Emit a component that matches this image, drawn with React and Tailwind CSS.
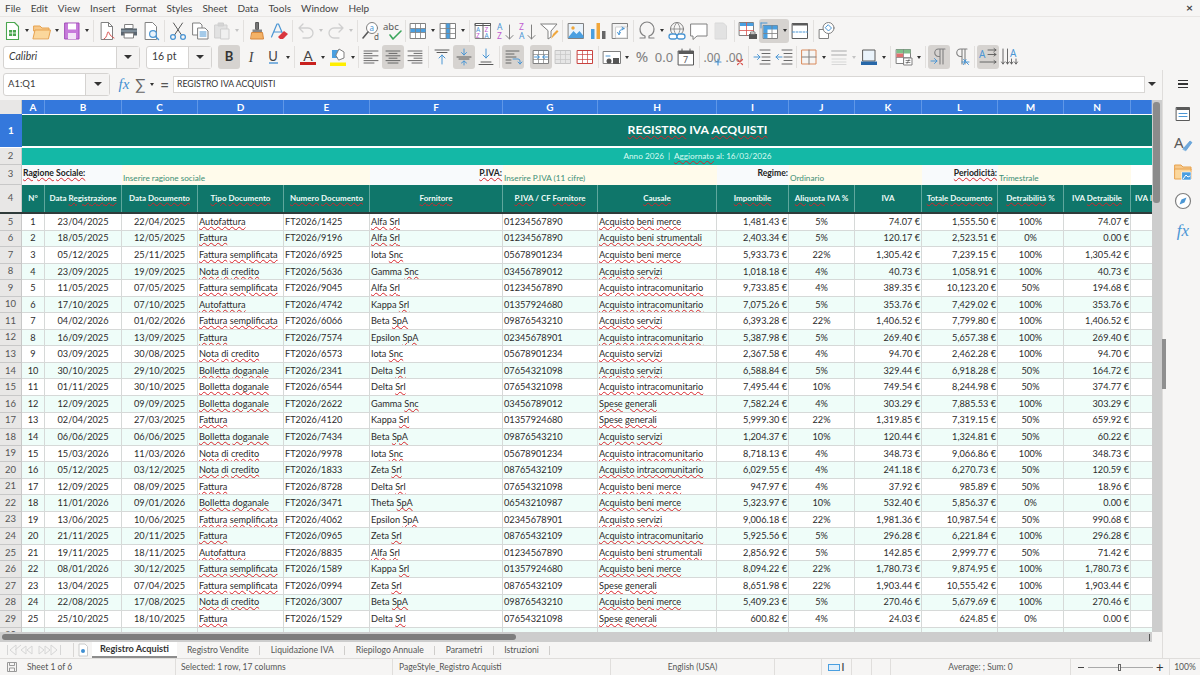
import React from "react";

const RAW = `1|23/04/2025|22/04/2025|Autofattura|FT2026/1425|Alfa Srl|01234567890|Acquisto beni merce|1,481.43|5%|74.07|1,555.50|100%|74.07
2|18/05/2025|12/05/2025|Fattura|FT2026/9196|Alfa Srl|01234567890|Acquisto beni strumentali|2,403.34|5%|120.17|2,523.51|0%|0.00
3|05/12/2025|25/11/2025|Fattura semplificata|FT2026/6925|Iota Snc|05678901234|Acquisto beni merce|5,933.73|22%|1,305.42|7,239.15|100%|1,305.42
4|23/09/2025|19/09/2025|Nota di credito|FT2026/5636|Gamma Snc|03456789012|Acquisto servizi|1,018.18|4%|40.73|1,058.91|100%|40.73
5|11/05/2025|07/05/2025|Fattura semplificata|FT2026/9045|Alfa Srl|01234567890|Acquisto intracomunitario|9,733.85|4%|389.35|10,123.20|50%|194.68
6|17/10/2025|07/10/2025|Autofattura|FT2026/4742|Kappa Srl|01357924680|Acquisto intracomunitario|7,075.26|5%|353.76|7,429.02|100%|353.76
7|04/02/2026|01/02/2026|Fattura semplificata|FT2026/6066|Beta SpA|09876543210|Acquisto servizi|6,393.28|22%|1,406.52|7,799.80|100%|1,406.52
8|16/09/2025|13/09/2025|Fattura|FT2026/7574|Epsilon SpA|02345678901|Acquisto intracomunitario|5,387.98|5%|269.40|5,657.38|100%|269.40
9|03/09/2025|30/08/2025|Nota di credito|FT2026/6573|Iota Snc|05678901234|Acquisto servizi|2,367.58|4%|94.70|2,462.28|100%|94.70
10|30/10/2025|29/10/2025|Bolletta doganale|FT2026/2341|Delta Srl|07654321098|Acquisto servizi|6,588.84|5%|329.44|6,918.28|50%|164.72
11|01/11/2025|30/10/2025|Bolletta doganale|FT2026/6544|Delta Srl|07654321098|Acquisto intracomunitario|7,495.44|10%|749.54|8,244.98|50%|374.77
12|12/09/2025|09/09/2025|Bolletta doganale|FT2026/2622|Gamma Snc|03456789012|Spese generali|7,582.24|4%|303.29|7,885.53|100%|303.29
13|02/04/2025|27/03/2025|Fattura|FT2026/4120|Kappa Srl|01357924680|Spese generali|5,999.30|22%|1,319.85|7,319.15|50%|659.92
14|06/06/2025|06/06/2025|Bolletta doganale|FT2026/7434|Beta SpA|09876543210|Acquisto servizi|1,204.37|10%|120.44|1,324.81|50%|60.22
15|15/03/2026|11/03/2026|Nota di credito|FT2026/9978|Iota Snc|05678901234|Acquisto intracomunitario|8,718.13|4%|348.73|9,066.86|100%|348.73
16|05/12/2025|03/12/2025|Nota di credito|FT2026/1833|Zeta Srl|08765432109|Acquisto intracomunitario|6,029.55|4%|241.18|6,270.73|50%|120.59
17|12/09/2025|08/09/2025|Fattura|FT2026/8728|Delta Srl|07654321098|Acquisto beni merce|947.97|4%|37.92|985.89|50%|18.96
18|11/01/2026|09/01/2026|Bolletta doganale|FT2026/3471|Theta SpA|06543210987|Acquisto beni merce|5,323.97|10%|532.40|5,856.37|0%|0.00
19|13/06/2025|10/06/2025|Fattura semplificata|FT2026/4062|Epsilon SpA|02345678901|Acquisto servizi|9,006.18|22%|1,981.36|10,987.54|50%|990.68
20|21/11/2025|20/11/2025|Fattura|FT2026/0965|Zeta Srl|08765432109|Acquisto intracomunitario|5,925.56|5%|296.28|6,221.84|100%|296.28
21|19/11/2025|18/11/2025|Autofattura|FT2026/8835|Alfa Srl|01234567890|Acquisto beni strumentali|2,856.92|5%|142.85|2,999.77|50%|71.42
22|08/01/2026|30/12/2025|Fattura semplificata|FT2026/1589|Kappa Srl|01357924680|Acquisto beni merce|8,094.22|22%|1,780.73|9,874.95|100%|1,780.73
23|13/04/2025|07/04/2025|Fattura semplificata|FT2026/0994|Zeta Srl|08765432109|Spese generali|8,651.98|22%|1,903.44|10,555.42|100%|1,903.44
24|22/08/2025|17/08/2025|Nota di credito|FT2026/3007|Beta SpA|09876543210|Acquisto beni merce|5,409.23|5%|270.46|5,679.69|100%|270.46
25|25/10/2025|18/10/2025|Fattura|FT2026/1529|Delta Srl|07654321098|Spese generali|600.82|4%|24.03|624.85|0%|0.00
26|14/05/2025|10/05/2025|Fattura semplificata|FT2026/2210|Alfa Srl|01234567890|Spese generali|8,144.12|4%|325.76|8,469.88|50%|162.88`;

const ROWS = RAW.split("\n").map((l) => l.split("|"));
const COLS = "grid grid-cols-[22px_23px_77px_76px_86px_86px_133px_95px_119px_72px_66px_67px_76px_66px_67px_21px]";
const LETTERS = ["A","B","C","D","E","F","G","H","I","J","K","L","M","N",""];
const OK = new Set(["Data","IVA","%","/","CF","N°","Anno","2026","|","16/03/2026","al:","Regime:","Inserire"]);

function Sq({ t, keep = OK }) {
  const parts = t.split(" ");
  return (
    <span className="whitespace-pre">
      {parts.map((w, i) => (
        <React.Fragment key={i}>
          {keep.has(w) ? w : <span className="underline decoration-wavy decoration-[#d8242a] decoration-1 underline-offset-1">{w}</span>}
          {i < parts.length - 1 ? " " : ""}
        </React.Fragment>
      ))}
    </span>
  );
}

const Svg = ({ children }) => <svg width="22" height="22" viewBox="0 0 22 22" fill="none" strokeLinecap="round" strokeLinejoin="round">{children}</svg>;
const B = ({ children, active }) => <div className={active ? "w-[22px] h-[24px] flex items-center justify-center rounded-[3px] bg-[#d6d3d0]" : "w-[22px] h-[24px] flex items-center justify-center"}>{children}</div>;
const Ar = ({ off }) => <div className="w-[8px] h-[24px] flex items-center justify-center"><div className={off ? "w-0 h-0 border-x-[2.5px] border-x-transparent border-t-[3px] border-t-[#c4c4c4]" : "w-0 h-0 border-x-[2.5px] border-x-transparent border-t-[3px] border-t-[#333]"} /></div>;
const Sep = () => <div className="w-[5px] h-[22px] flex justify-center"><div className="w-px h-full bg-[#e2e0de]" /></div>;
const Sep3 = () => <div className="w-[3px] h-[22px] flex justify-center"><div className="w-px h-full bg-[#e2e0de]" /></div>;

const BL = "#4b96d4", DK = "#5a5a5a", GR = "#808080", LG = "#cfcfcf";

const INew = () => <Svg><path d="M5.5 2.5h8l4 4v13h-12z" fill="#fff" stroke="#4aa64f" strokeWidth="1.1"/><path d="M8 10h7v6H8z" fill="#4aa64f"/><path d="M8 13h7M11.500 10v6" stroke="#fff" strokeWidth=".8"/></Svg>;
const IOpen = () => <Svg><path d="M3 6h6l2 2h7v3H3z" fill="#f7c98b" stroke="#e7a24f"/><path d="M2 18.500 4 10h15.500l-2 8.500z" fill="#fbd79c" stroke="#e7a24f"/></Svg>;
const ISave = () => <Svg><path d="M4 3h14v16H4z" fill="#c77bdb" stroke="#a24db8"/><path d="M7 3.500h8v6H7z" fill="#fff"/><path d="M7 13h8v6H7z" fill="#f3e5f7"/></Svg>;
const IPdf = () => <Svg><path d="M5.500 2.500h7l4 4v13h-11z" fill="#fff" stroke={GR}/><path d="M12.500 2.500v4h4" stroke={GR}/><path d="M8 19c3-1 3-6 4-7s1 4 6 6" stroke="#d9534f"/></Svg>;
const IPrint = () => <Svg><path d="M7 4.500h8v4H7z" fill="#fff" stroke={GR}/><path d="M3 8.500h16v7H3z" fill="#5b6670"/><path d="M6.500 13h9v5h-9z" fill="#fff" stroke={GR}/><path d="M3.500 11h15" stroke="#9fb2bf"/></Svg>;
const IPreview = () => <Svg><path d="M5.500 2.500h7l4 4v13h-11z" fill="#fff" stroke={GR}/><circle cx="13" cy="14" r="3.400" fill="#eaf3fb" stroke={BL} strokeWidth="1.200"/><path d="m15.500 16.500 3 3" stroke={BL} strokeWidth="1.400"/></Svg>;
const ICut = () => <Svg><path d="M6.500 3 14.500 15M15.500 3 7.500 15" stroke={DK}/><circle cx="6" cy="17" r="2.400" stroke={BL} strokeWidth="1.300"/><circle cx="16" cy="17" r="2.400" stroke={BL} strokeWidth="1.300"/></Svg>;
const ICopy = () => <Svg><path d="M4 3h7l2 2v10H4z" fill="#fff" stroke={GR}/><path d="M9 8h7l3 3v8H9z" fill="#fff" stroke={GR}/><path d="M11 12h6M11 14h6M11 16h6" stroke={BL}/></Svg>;
const IPaste = () => <Svg><path d="M4 5h12v13H4z" fill="#e2e2e2" stroke={LG}/><path d="M7.500 3h5v3h-5z" fill="#d5d5d5" stroke={LG}/><path d="M10 9h8v10h-8z" fill="#f0f0f0" stroke={LG}/></Svg>;
const IBrush = () => <Svg><path d="M10 2.500h2.500v7H10z" fill="#777" stroke="#555"/><path d="M6.500 9.500h9.500v3H6.500z" fill="#888"/><path d="M6 12.500h10.500l1 6.500h-12.500z" fill="#f4b266" stroke="#d6873c"/></Svg>;
const IClear = () => <Svg><path d="M3.500 17 9 4h1.500L16 17M6 12h7" stroke={BL} strokeWidth="1.200"/><path d="m10 17 6-6 4 3-5 5h-3z" fill="#d9363e"/></Svg>;
const IUndo = () => <Svg><path d="M4 8h9a5 5 0 0 1 0 10H8M4 8l4-4M4 8l4 4" stroke={LG} strokeWidth="1.300"/></Svg>;
const IRedo = () => <Svg><path d="M18 8H9a5 5 0 0 0 0 10h5M18 8l-4-4M18 8l-4 4" stroke={LG} strokeWidth="1.300"/></Svg>;
const IFind = () => <Svg><circle cx="12" cy="8" r="5.500" fill="#fff" stroke={GR}/><path d="m8 12-5 6" stroke={DK} strokeWidth="1.600"/><text x="9.500" y="10.500" fontSize="8" fill={BL} fontFamily="Noto Sans">a</text><text x="14" y="20" fontSize="8" fill={DK} fontFamily="Noto Sans">d</text></Svg>;
const ISpell = () => <Svg><text x="1" y="10" fontSize="9.500" fill={DK} fontFamily="Noto Sans">abc</text><path d="m8 15 3 4 8-8" stroke="#3ca55c" strokeWidth="1.600"/></Svg>;
const ITableR = () => <Svg><path d="M3.500 3.500h15v15h-15z" fill="#fff" stroke={GR}/><path d="M3.500 8.500h15v4h-15z" fill="#4a9fe0"/><path d="M3.500 8.500h15M3.500 12.500h15M8.500 3.500v15M13.500 3.500v15" stroke={GR} strokeWidth=".8"/></Svg>;
const ITableC = () => <Svg><path d="M3.500 3.500h15v15h-15z" fill="#fff" stroke={GR}/><path d="M9 3.500h4v15H9z" fill="#4a9fe0"/><path d="M3.500 8.500h15M3.500 13.500h15M9 3.500v15M13 3.500v15" stroke={GR} strokeWidth=".8"/></Svg>;
const IAuto = () => <Svg><path d="M3.500 3.500h15v15h-15z" fill="#fff" stroke={GR}/><path d="M3.500 3.500h15v2h-15zM11 3.500v15" stroke={DK}/><text x="4" y="12" fontSize="6.500" fill={BL} fontFamily="Noto Sans">A</text><text x="4" y="18" fontSize="6.500" fill="#c05cd0" fontFamily="Noto Sans">Z</text><text x="12.500" y="12" fontSize="6.500" fill="#c05cd0" fontFamily="Noto Sans">Z</text><text x="12.500" y="18" fontSize="6.500" fill={BL} fontFamily="Noto Sans">A</text></Svg>;
const ISortA = () => <Svg><text x="3" y="10" fontSize="8.500" fill={BL} fontFamily="Noto Sans">A</text><text x="3" y="19" fontSize="8.500" fill="#c05cd0" fontFamily="Noto Sans">Z</text><path d="M15.500 5v14M12 15.500l3.500 3.500 3.500-3.500" stroke={GR}/></Svg>;
const ISortZ = () => <Svg><text x="3" y="10" fontSize="8.500" fill="#c05cd0" fontFamily="Noto Sans">Z</text><text x="3" y="19" fontSize="8.500" fill={BL} fontFamily="Noto Sans">A</text><path d="M15.500 5v14M12 15.500l3.500 3.500 3.500-3.500" stroke={GR}/></Svg>;
const IFilter = () => <Svg><path d="M3 4h16l-6 7v6l-3 2v-8z" fill="#fff" stroke={GR}/><path d="m13 19 2-5 4-4 1.500 1.500-4 4z" fill="#f0a63a"/></Svg>;
const IImage = () => <Svg><path d="M3.500 3.500h15v15h-15z" fill="#eaf3fb" stroke={GR}/><circle cx="8" cy="8" r="1.700" fill="#f0a63a"/><path d="M3.500 17l5-6 3 3 3-3 4 5v2h-15z" fill="#4a9fe0"/></Svg>;
const IChart = () => <Svg><path d="M4 9h3.500v10H4z" fill="#4a9fe0"/><path d="M9.500 3h3.500v16H9.500z" fill="#f0a63a"/><path d="M15 11h3.500v8H15z" fill="#666"/></Svg>;
const IPivot = () => <Svg><path d="M3.500 3.500h15v15h-15z" fill="#f4f4f4" stroke={GR}/><path d="M7 7h11v11H7z" fill="#fff" stroke={LG}/><path d="M15 8.500c-3 0-5 2-5 6M15 8.500l-2-1.500M15 8.500l-2 1.500M10 14.500l-1.500-2M10 14.500l1.500-2" stroke={BL}/></Svg>;
const IOmega = () => <Svg><path d="M4 18h5v-2c-3-1-5-3.500-5-7a7 7 0 0 1 14 0c0 3.500-2 6-5 7v2h5" stroke={GR} strokeWidth="1.200"/></Svg>;
const ILink = () => <Svg><circle cx="11" cy="9" r="6.500" stroke={GR}/><path d="M4.500 9h13M11 2.500c-4 4-4 9 0 13M11 2.500c4 4 4 9 0 13" stroke={GR} strokeWidth=".8"/><rect x="3" y="14" width="8" height="5" rx="2.500" stroke={BL} strokeWidth="1.300" fill="#fff"/><rect x="11" y="14" width="8" height="5" rx="2.500" stroke={BL} strokeWidth="1.300" fill="#fff"/></Svg>;
const IComment = () => <Svg><path d="M3 4h16v12H9l-4 3.500V16H3z" fill="#fff" stroke={GR}/></Svg>;
const INote = () => <Svg><path d="M5.500 3h8l3 3v13h-11z" fill="#e2e2e2" stroke="#d8d8d8"/></Svg>;
const IPrintR = () => <Svg><path d="M2.500 2.500h14v13h-14z" fill="#fff" stroke={GR}/><path d="M3 3h13.500v3H3z" fill="#4a9fe0"/><path d="M2.500 10.500h14M9.500 2.500v13" stroke="#d9534f" strokeWidth=".8"/><path d="M12 14h8v5h-8z" fill="#555"/><path d="M14 12h4v2h-4z" fill="#fff" stroke={GR}/></Svg>;
const IFreeze = () => <Svg><path d="M4.500 5.500h14v13h-14z" fill="#fff" stroke={GR}/><path d="M4.500 5.500h14v4h-14zM4.500 5.500h4v13h-4z" fill="#4a9fe0"/><path d="M4.500 13.500h14M13 5.500v13" stroke={GR} strokeWidth=".8"/><path d="M2 3h6M2 3v5" stroke={BL}/></Svg>;
const ISplit = () => <Svg><path d="M3.500 3.500h15v15h-15z" fill="#fff" stroke={DK}/><path d="M3.500 3.500h15v2h-15z" fill={DK}/><path d="M3.500 12h15" stroke={BL} strokeDasharray="2 1.500"/></Svg>;
const IShapes = () => <Svg><path d="M3.500 9.500h9v9h-9z" fill="#fff" stroke={GR}/><circle cx="12.500" cy="8" r="5.500" fill="#fff" stroke={GR}/><path d="m12.500 5 3 3-3 3-3-3z" stroke={BL}/></Svg>;

const IAlign = ({ kind, c = DK }) => {
  const full = [[4,18],[4,12],[4,18],[4,12],[4,18],[4,14]];
  const d = full.map(([a, b], i) => {
    const w = b - a;
    const x = kind === "l" ? 4 : kind === "c" ? 11 - w / 2 : 18 - w;
    return `M${x} ${5 + i * 2.400}h${w}`;
  }).join("");
  return <Svg><path d={d} stroke={c} strokeWidth=".9" /></Svg>;
};
const IVTop = () => <Svg><path d="M4 4h14M6 6.500h10" stroke={DK}/><path d="M11 18V9M8 12l3-3 3 3" stroke={BL}/></Svg>;
const IVMid = () => <Svg><path d="M4 11h14M6 13h10" stroke={DK}/><path d="M11 3v6M8.500 6.500 11 9l2.500-2.500M11 19v-4M8.500 17 11 15l2.500 2" stroke={BL}/></Svg>;
const IVBot = () => <Svg><path d="M4 18.500h14M6 16h10" stroke={DK}/><path d="M11 3v9M8 9l3 3 3-3" stroke={BL}/></Svg>;
const IWrap = () => <Svg><path d="M4 5h13M4 8h8M4 11h10M4 14h5M4 17h5" stroke={DK} strokeWidth=".9"/><path d="M11 13h5a2 2 0 0 1 2 2v3M16 16l2 2 2-2" stroke={BL}/></Svg>;
const IMerge = ({ c = BL, g = GR, f = "#fff" }) => <Svg><path d="M3.500 4.500h15v13h-15z" fill={f} stroke={g}/><path d="M3.500 8.500h15M3.500 13.500h15M8.500 4.500v13M13.500 4.500v13" stroke={g} strokeWidth=".7"/>{c === BL && <path d="M4.500 11h5M7.500 9.500 9 11l-1.500 1.500M17.500 11h-5M14.500 9.500 13 11l1.500 1.500" stroke={BL}/>}</Svg>;
const ICurrency = () => <Svg><path d="M2.500 5.500h17v12h-17z" fill="#fff" stroke={GR}/><circle cx="8" cy="15" r="2.500" fill="#555"/><path d="M12 12h6v6h-6z" fill="#555"/><path d="M5 10h4" stroke={BL}/></Svg>;
const IDate = () => <Svg><path d="M3.500 5h15v14h-15z" fill="#fff" stroke={DK}/><path d="M3.500 5h15v3h-15z" fill={DK}/><path d="M7 3v3M15 3v3" stroke={DK}/><text x="8" y="17" fontSize="9" fill={DK} fontFamily="Noto Sans">7</text></Svg>;
const Txt = ({ t, size = 13, x = 11, y = 16, c = DK }) => <Svg><text x={x} y={y} fontSize={size} fill={c} textAnchor="middle" fontFamily="Noto Sans">{t}</text></Svg>;
const IDecPlus = () => <Svg><text x="10" y="16" fontSize="12" fill={GR} textAnchor="middle" fontFamily="Noto Sans">.00</text><path d="M16 13v6M13 16h6" stroke={BL} strokeWidth="1.200"/></Svg>;
const IDecX = () => <Svg><text x="10" y="16" fontSize="12" fill={GR} textAnchor="middle" fontFamily="Noto Sans">.00</text><path d="m13.500 13.500 5 5M18.500 13.500l-5 5" stroke="#d9534f" strokeWidth="1.200"/></Svg>;
const IIndent = ({ out }) => <Svg><path d="M9 4h10M11 7.500h8M11 11h8M11 14.500h8M9 18h10" stroke={DK} strokeWidth=".9"/><path d={out ? "M9 11H3M5.500 8.500 3 11l2.500 2.500" : "M3 11h6M6.500 8.500 9 11l-2.500 2.500"} stroke={BL}/></Svg>;
const IBorders = () => <Svg><path d="M4 4h14v14H4z" stroke="#d98a5c"/><path d="M11 4v14M4 11h14" stroke={GR}/></Svg>;
const ILinesB = () => <Svg><path d="M4 5h14M4 9h14" stroke={LG} strokeWidth="2"/><path d="M4 13h14M4 16h14M4 18.500h14" stroke={LG} strokeWidth=".8"/></Svg>;
const IBorderC = () => <Svg><path d="M5 4h12v11H5z" fill="#eaf3fb" stroke={DK}/><path d="M3 15.500h16v3.500H3z" fill="#2767a8"/></Svg>;
const ICond = () => <Svg><path d="M3.500 3.500h14v14h-14z" fill="#fff" stroke={GR}/><path d="M3.500 3.500h14v4h-14z" fill="#7fc08a"/><path d="M3.500 7.500h7v4h-7z" fill="#e07070"/><path d="M3.500 11.500h14M10.500 3.500v14" stroke={GR} strokeWidth=".7"/><path d="M11 12h8v7h-8z" fill="#fff" stroke={GR}/><path d="M13 14.500h4M13 16.500h4M16 13.500l-2 4" stroke={DK} strokeWidth=".7"/></Svg>;
const IPara = ({ rtl }) => <Svg><path d="M17 3h-6.500a3.500 3.500 0 0 0 0 7.500H12M12 3v15M15 3v15" stroke={GR} strokeWidth="1.100"/>{rtl ? <path d="M12 16h7M16 13.500l-2.500 5M13.500 13.500l5 5" stroke={BL}/> : <path d="M3 15h6M6.500 12.500 9 15l-2.500 2.500" stroke={BL}/>}</Svg>;
const ILtr = () => <Svg><text x="2" y="12" fontSize="10" fill={BL} fontFamily="Noto Sans">A</text><path d="M11 4h8M17 2.500 19 4l-2 1.500M11 8.500h8M17 7l2 1.500L17 10M3 16h16M17 14.500l2 1.500-2 1.500" stroke={DK} strokeWidth=".9"/></Svg>;
const ITtb = () => <Svg><text x="11" y="11" fontSize="10" fill={BL} fontFamily="Noto Sans">A</text><path d="M4 3v15M2.500 16 4 18l1.500-2M8.500 3v15M7 16l1.500 2 1.500-2M17 13v5M15.500 16l1.500 2 1.500-2M12.500 13v5M11 16l1.500 2 1.500-2" stroke={DK} strokeWidth=".9"/></Svg>;

const ICols = ["Data Registrazione","Data Documento","Tipo Documento","Numero Documento","Fornitore","P.IVA / CF Fornitore","Causale","Imponibile","Aliquota IVA %","IVA","Totale Documento","Detraibilità %","IVA Detraibile","IVA Indetraibile"];
const ALIGN = {
  0:"justify-center",1:"justify-center",2:"justify-center",3:"justify-start pl-px",4:"justify-start pl-px",5:"justify-start pl-px",6:"justify-start pl-px",7:"justify-start pl-px",
  8:"justify-end pr-px",9:"justify-center",10:"justify-end pr-px",11:"justify-end pr-px",12:"justify-center",13:"justify-end pr-px",
};
const KEEP_F = new Set(["Iota","Gamma","Kappa","Beta","Epsilon","Delta","Zeta","Theta"]);
const EMPTY = new Set();

function DataRow({ r, rowNo, i }) {
  const alt = i % 2 === 1;
  return (
    <div className={`${COLS} h-[16.55px]`}>
      <div className="bg-[#e8e7e6] border-r border-b border-[#c8c8c8] flex items-center justify-center text-[#555] text-[9.5px]">{rowNo}</div>
      {r.map((v, c) => (
        <div key={c} className={`${alt ? "bg-[#effdf9]" : "bg-white"} ${ALIGN[c]} border-r border-b border-[#d6d9d8] flex items-center overflow-hidden whitespace-nowrap text-[#2b2b2b]`}>
          {c === 3 || c === 7 ? <Sq t={v} keep={EMPTY} /> : c === 5 ? <Sq t={v} keep={KEEP_F} /> : (c === 8 || c === 10 || c === 11 || c === 13) ? `${v} €` : v}
        </div>
      ))}
      <div className={`${alt ? "bg-[#effdf9]" : "bg-white"} border-b border-[#d6d9d8]`} />
    </div>
  );
}

function Tab({ t, on }) {
  return on
    ? <div className="w-[85px] h-[16px] flex items-center justify-center font-bold text-[9.2px] text-[#333] border-b-2 border-[#8d8d8d] bg-white">{t}</div>
    : <div className="flex items-center"><span className="text-[#555]">{t}</span></div>;
}
function TabSep() {
  return <div className="w-px h-[9px] bg-[#cfcdcb] mx-[10.500px]" />;
}
function NewSheet() {
  return <svg width="12" height="14" viewBox="0 0 12 14" fill="none"><path d="M2 1h6l2.500 2.500V13H2z" fill="#fff" stroke="#ccc"/><circle cx="6" cy="8" r="2" fill="#3f8fd2"/></svg>;
}
function TabNav() {
  return (
    <svg width="60" height="14" viewBox="0 0 60 14" fill="none" stroke="#d6d6d6">
      <path d="M1.500 2v10M10 2 4 7l6 5zM15 2 9 7M20 3l-5 4 5 4zM26 3l-5 4 5 4zM33 3l5 4-5 4zM39 3l5 4-5 4zM45 2l6 5-6 5zM54.500 2v10" />
    </svg>
  );
}

export default function App() {
  return (
    <div className="w-[1200px] h-[675px] overflow-hidden flex flex-col bg-[#f6f5f4] text-[#3a3a3a] font-['Lato',sans-serif] text-[9.5px]">
      {/* menu */}
      <div className="h-[17px] shrink-0 flex items-center justify-between border-b border-[#e8e6e4] pr-[7px] text-[10px] text-[#444]">
        <div className="flex gap-[10px] pl-[5px]">
          {["File","Edit","View","Insert","Format","Styles","Sheet","Data","Tools","Window","Help"].map((m) => <span key={m}>{m}</span>)}
        </div>
        <span className="text-[12px] font-bold leading-none">×</span>
      </div>

      {/* toolbar 1 */}
      <div className="h-[27px] shrink-0 flex items-center pl-px">
        <B><INew/></B><Ar/><B><IOpen/></B><Ar/><B><ISave/></B><Ar/><Sep/>
        <B><IPdf/></B><B><IPrint/></B><B><IPreview/></B><Sep/>
        <B><ICut/></B><B><ICopy/></B><B><IPaste/></B><Ar off/><Sep/>
        <B><IBrush/></B><B><IClear/></B><Sep/>
        <B><IUndo/></B><Ar off/><B><IRedo/></B><Ar off/><Sep/>
        <B><IFind/></B><B><ISpell/></B><Sep3/>
        <B><ITableR/></B><Ar/><B><ITableC/></B><Ar/><Sep/>
        <B><IAuto/></B><B><ISortA/></B><B><ISortZ/></B><B><IFilter/></B><Sep/>
        <B><IImage/></B><B><IChart/></B><B><IPivot/></B><Sep/>
        <B><IOmega/></B><Ar/><B><ILink/></B><B><IComment/></B><B><INote/></B><Sep/>
        <B><IPrintR/></B>
        <div className="flex rounded-[3px] bg-[#d6d3d0]"><B><IFreeze/></B><Ar/></div>
        <B><ISplit/></B><Sep/><B><IShapes/></B>
      </div>

      {/* toolbar 2 */}
      <div className="h-[26px] shrink-0 flex items-center pl-[3px] text-[10.5px]">
        <div className="w-[137px] h-[23px] flex bg-white border border-[#d5d3d1] rounded-[3px] mr-[6px]">
          <span className="flex-1 flex items-center pl-[5px] italic">Calibri</span>
          <div className="w-[23px] bg-[#f4f3f2] border-l border-[#d5d3d1] flex items-center justify-center"><div className="w-0 h-0 border-x-[4px] border-x-transparent border-t-[4px] border-t-[#333]" /></div>
        </div>
        <div className="w-[66px] h-[23px] flex bg-white border border-[#d5d3d1] rounded-[3px] mr-[6px]">
          <span className="flex-1 flex items-center pl-[5px]">16 pt</span>
          <div className="w-[23px] bg-[#f4f3f2] border-l border-[#d5d3d1] flex items-center justify-center"><div className="w-0 h-0 border-x-[4px] border-x-transparent border-t-[4px] border-t-[#333]" /></div>
        </div>
        <B active><span className="font-bold text-[13px] text-[#333]">B</span></B>
        <B><span className="italic font-['Liberation_Serif',serif] text-[14px] text-[#444]">I</span></B>
        <B><div className="flex flex-col items-center leading-[12px] text-[13px] text-[#444]"><span>U</span><div className="w-[9px] h-[2px] bg-[#7fb2de]" /></div></B><Ar/><Sep/>
        <B><div className="flex flex-col items-center leading-[13px] text-[14px] text-[#444]"><span>A</span><div className="w-[16px] h-[3px] bg-[#c9211e]" /></div></B><Ar/>
        <B><Svg><path d="M5 4h8v8H5z" fill="#4a9fe0"/><path d="m9 9 3-6 5 3v6l-5 2z" fill="#fff" stroke={GR}/><path d="M3 16.500h16V20H3z" fill="#ffee00"/></Svg></B><Ar/><Sep3/>
        <B><IAlign kind="l"/></B><B active><IAlign kind="c"/></B><B><IAlign kind="r"/></B><Sep/>
        <B><IVTop/></B><B active><IVMid/></B><B><IVBot/></B><Sep/>
        <B active><IWrap/></B><div className="w-[6px]"/><B active><IMerge/></B><B><IMerge c="none" g="#c4c4c4" f="#e6e6e6"/></B><B><IMerge c="none" g="#c9423f"/></B><Sep/>
        <B><ICurrency/></B><Ar/><B><Txt t="%" size={15} c={GR}/></B><B><Txt t="0.0" size={13} c={GR}/></B><B><IDate/></B><Sep/>
        <B><IDecPlus/></B><B><IDecX/></B><Sep/>
        <B><IIndent/></B><B><IIndent out/></B><Sep3/>
        <B><IBorders/></B><Ar/><B><ILinesB/></B><Ar off/><B><IBorderC/></B><Ar/><Sep/>
        <B><ICond/></B><Ar/><Sep/>
        <B active><IPara/></B><B><IPara rtl/></B><Sep/>
        <B active><ILtr/></B><B><ITtb/></B>
      </div>

      {/* middle */}
      <div className="h-[588px] shrink-0 flex">
        <div className="w-[1162px] flex flex-col">
          {/* formula bar */}
          <div className="h-[30px] shrink-0 flex items-center pl-[3px] pb-[2px]">
            <div className="w-[107px] h-[23px] flex bg-white border border-[#d5d3d1] rounded-[3px] text-[9.5px]">
              <span className="flex-1 flex items-center pl-[4px]">A1:Q1</span>
              <div className="w-[24px] bg-[#f4f3f2] border-l border-[#d5d3d1] flex items-center justify-center"><div className="w-0 h-0 border-x-[4px] border-x-transparent border-t-[4px] border-t-[#333]" /></div>
            </div>
            <div className="w-[22px] ml-[3px] text-center italic font-['Liberation_Serif',serif] text-[15px] text-[#3f8fd2]">fx</div>
            <div className="w-[10px] mr-[3px] text-center text-[15px] leading-none text-[#666]">∑</div>
            <div className="w-[8px]"><Ar/></div>
            <div className="w-[17px] text-center text-[15px] leading-none font-bold text-[#555]">=</div>
            <div className="w-[972px] h-[17px] bg-white border border-[#d9d7d5] flex items-center pl-[3px] text-[8.7px] text-[#333]">REGISTRO IVA ACQUISTI</div>
            <div className="w-[14px] flex justify-center"><div className="w-0 h-0 border-x-[4px] border-x-transparent border-t-[4px] border-t-[#333]" /></div>
          </div>

          {/* grid + vscroll */}
          <div className="h-[532px] shrink-0 flex">
            <div className="w-[1152px] h-full overflow-hidden text-[9.2px]">
              <div className={`${COLS} h-[14px] font-bold text-white`}>
                <div className="bg-[#e8e7e6] border-r border-b border-[#c8c8c8]" />
                {LETTERS.map((l, i) => <div key={i} className="bg-[#3478dc] border-r border-[#5f97e8] flex items-center justify-center text-[10px]">{l}</div>)}
              </div>
              <div className={`${COLS} h-[34px]`}>
                <div className="bg-[#3478dc] text-white font-bold flex items-center justify-center text-[10px] border-b border-white">1</div>
                <div className="col-span-15 bg-[#0f766a] border-t border-white border-b-2 flex items-center justify-center text-white font-bold text-[12.2px] pl-[221px] pb-[1px]"><Sq t="REGISTRO IVA ACQUISTI" /></div>
              </div>
              <div className={`${COLS} h-[17px]`}>
                <div className="bg-[#e8e7e6] text-[#555] flex items-center justify-center text-[9.5px] border-b border-[#c8c8c8] border-r">2</div>
                <div className="col-span-15 bg-[#14b8a6] flex items-center justify-center pl-[221px] text-[#d8fbf2] text-[8.2px]"><span className="whitespace-pre"><Sq t="Anno 2026" />  |  <Sq t="Aggiornato al: 16/03/2026" /></span></div>
              </div>
              <div className={`${COLS} h-[20px] text-[8.6px]`}>
                <div className="bg-[#e8e7e6] text-[#555] text-[9.5px] flex items-center justify-center border-b border-[#c8c8c8] border-r">3</div>
                <div className="col-span-2 bg-[#f8fafc] flex items-center font-bold text-[#222] pb-[3px] whitespace-nowrap pl-px"><Sq t="Ragione Sociale:" /></div>
                <div className="col-span-3 bg-[#fffbeb] flex items-end pl-px text-[#3e8f75] text-[8.2px] pb-[1px]">Inserire ragione sociale</div>
                <div className="bg-[#f8fafc] flex items-center justify-end font-bold text-[#222] pb-[3px] pr-[1px]"><Sq t="P.IVA:" /></div>
                <div className="col-span-2 bg-[#fffbeb] flex items-end pl-px text-[#3e8f75] text-[8.2px] pb-[1px]">Inserire P.IVA (11 cifre)</div>
                <div className="bg-[#f8fafc] flex items-center justify-end font-bold text-[#222] pb-[3px] pr-[1px]">Regime:</div>
                <div className="col-span-2 bg-[#fffbeb] flex items-end pl-px text-[#3e8f75] text-[8.2px] pb-[1px]">Ordinario</div>
                <div className="bg-[#f8fafc] flex items-center justify-end font-bold text-[#222] pb-[3px] pr-[1px]"><Sq t="Periodicità:" /></div>
                <div className="col-span-2 bg-[#fffbeb] flex items-end pl-px text-[#3e8f75] text-[8.2px] pb-[1px]">Trimestrale</div>
                <div className="bg-white" />
              </div>
              <div className={`${COLS} h-[29px] border-b-2 border-[#2f3b3a] text-[#eefbf8] font-bold text-[8px]`}>
                <div className="bg-[#e8e7e6] text-[#555] text-[9.5px] font-normal flex items-center justify-center border-r border-[#c8c8c8]">4</div>
                <div className="bg-[#0f766a] border-r border-[#5fa79d] flex items-center justify-center pb-[2px]">N°</div>
                {ICols.map((h, i) => (
                  <div key={i} className={i === 13 ? "bg-[#0f766a] flex items-center justify-start pl-[4px] pb-[2px] overflow-hidden whitespace-nowrap" : "bg-[#0f766a] border-r border-[#5fa79d] flex items-center justify-center pb-[2px] overflow-hidden whitespace-nowrap"}>
                    {i === 13 ? "IVA Indetraibile" : <Sq t={h} />}
                  </div>
                ))}
              </div>
              {ROWS.map((r, i) => <DataRow key={i} r={r} rowNo={i + 5} i={i} />)}
            </div>
            <div className="w-[10px] h-full bg-[#cdcdcd] px-px pt-[2px]">
              <div className="w-[7px] h-[101px] bg-[#8b8b8b] rounded-[3px]" />
            </div>
          </div>

          {/* hscroll */}
          <div className="h-[10px] shrink-0 w-[1152px] bg-[#cdcdcd] pl-[2px] pt-[2px] flex justify-between pr-[2px]">
            <div className="w-[514px] h-[6px] bg-[#7d7d7d] rounded-[3px]" />
            <div className="w-px h-[7px] bg-[#555]" />
          </div>

          {/* tabs */}
          <div className="h-[16px] shrink-0 flex items-center pl-[6px] text-[8.6px]">
            <div className="w-[60px] flex items-center"><TabNav /></div>
            <div className="w-px h-[14px] bg-[#d8d6d4] ml-[7px]" />
            <div className="w-[18px] flex justify-center"><NewSheet /></div>
            <Tab t="Registro Acquisti" on />
            <div className="w-[10px]" />
            <Tab t="Registro Vendite" />
            <TabSep />
            <Tab t="Liquidazione IVA" />
            <TabSep />
            <Tab t="Riepilogo Annuale" />
            <TabSep />
            <Tab t="Parametri" />
            <TabSep />
            <Tab t="Istruzioni" />
            <TabSep />
          </div>
        </div>

        {/* sidebar */}
        <div className="w-[38px] relative border-l border-[#dfdddb] flex flex-col items-center pl-[2px] pt-[5px]">
          <div className="absolute left-[-1px] top-[269px] w-[4px] h-[50px] bg-[#8f8f8f]" />
          <div className="h-[18px] flex flex-col justify-center gap-[2px]">
            <div className="w-[10px] h-[1.5px] bg-[#333]" /><div className="w-[10px] h-[1.5px] bg-[#333]" /><div className="w-[10px] h-[1.5px] bg-[#333]" />
          </div>
          <div className="h-[10px]" />
          <div className="flex flex-col gap-[7px]">
            <Svg><path d="M4.500 4.500h13v13h-13z" fill="#fff" stroke={DK}/><path d="M4.500 4.500h13v2.500h-13z" fill={DK}/><path d="M7 10.500h8M7 13.500h8" stroke={BL}/></Svg>
            <Svg><text x="2" y="16" fontSize="15" fill={DK} fontFamily="Noto Sans">A</text><path d="m11 17 7-8 2 1.500-6 8z" fill="#6fa8dc" stroke={BL} strokeWidth=".6"/></Svg>
            <Svg><path d="M3 4h6l2 2h8v3H3z" fill="#f7c98b" stroke="#e7a24f"/><path d="M3 8h16v10H3z" fill="#fbd79c" stroke="#e7a24f"/><path d="M10 11h9v8h-9z" fill="#4a9fe0" stroke="#fff" strokeWidth=".6"/><path d="m11 18 3-4 2 2 2-1" stroke="#fff"/></Svg>
            <Svg><circle cx="11" cy="11" r="7.500" fill="#fff" stroke={GR} strokeWidth="1.200"/><path d="m14.500 7.500-5 2-2 5 5-2z" fill={BL}/></Svg>
            <Svg><text x="11" y="17" fontSize="17" fill={BL} fontStyle="italic" textAnchor="middle" fontFamily="Liberation Serif">fx</text></Svg>
          </div>
        </div>
      </div>

      {/* status */}
      <div className="h-[17px] shrink-0 flex items-center border-t border-[#dfdddb] text-[8.5px] text-[#555]">
        <div className="w-[176px] h-full flex items-center pl-[6px] gap-[9px] border-r border-[#e0dedc]">
          <svg width="12" height="12" viewBox="0 0 12 12" fill="none"><path d="M1.500 1.500h9v9h-9z" stroke="#999"/><path d="M3.500 1.500h5v3h-5zM3.500 7h5v3.500h-5z" stroke="#999"/></svg>
          <span>Sheet 1 of 6</span>
        </div>
        <div className="w-[217px] h-full flex items-center pl-[5px] border-r border-[#e0dedc]">Selected: 1 row, 17 columns</div>
        <div className="w-[218px] h-full flex items-center pl-[6px] border-r border-[#e0dedc]">PageStyle_Registro Acquisti</div>
        <div className="w-[164px] h-full flex items-center justify-center border-r border-[#e0dedc]">English (USA)</div>
        <div className="w-[47px] h-full border-r border-[#e0dedc]" />
        <div className="w-[30px] h-full flex items-center justify-center gap-px border-r border-[#e0dedc]">
          <div className="w-[12px] h-[7px] border border-[#4a9fe0] bg-[#e4f0fa]" />
          <span className="text-[12px] leading-none text-[#444]">I</span>
        </div>
        <div className="w-[20px] h-full border-r border-[#e0dedc]" />
        <div className="w-[19px] h-full border-r border-[#e0dedc]" />
        <div className="w-[180px] h-full flex items-center justify-center border-r border-[#e0dedc]">Average: ; Sum: 0</div>
        <div className="w-[99px] h-full flex items-center border-r border-[#e0dedc]">
          <div className="w-[6px] h-px bg-[#444] ml-[7px]" />
          <div className="w-[65px] h-px bg-[#aaa] ml-[4px] relative">
            <div className="absolute left-[30px] top-[-3px] w-[3px] h-[7px] bg-[#f6f5f4] border border-[#666]" />
          </div>
          <span className="ml-[3px] text-[13px] leading-none text-[#333]">+</span>
        </div>
        <div className="flex-1 text-center">100%</div>
      </div>
    </div>
  );
}
